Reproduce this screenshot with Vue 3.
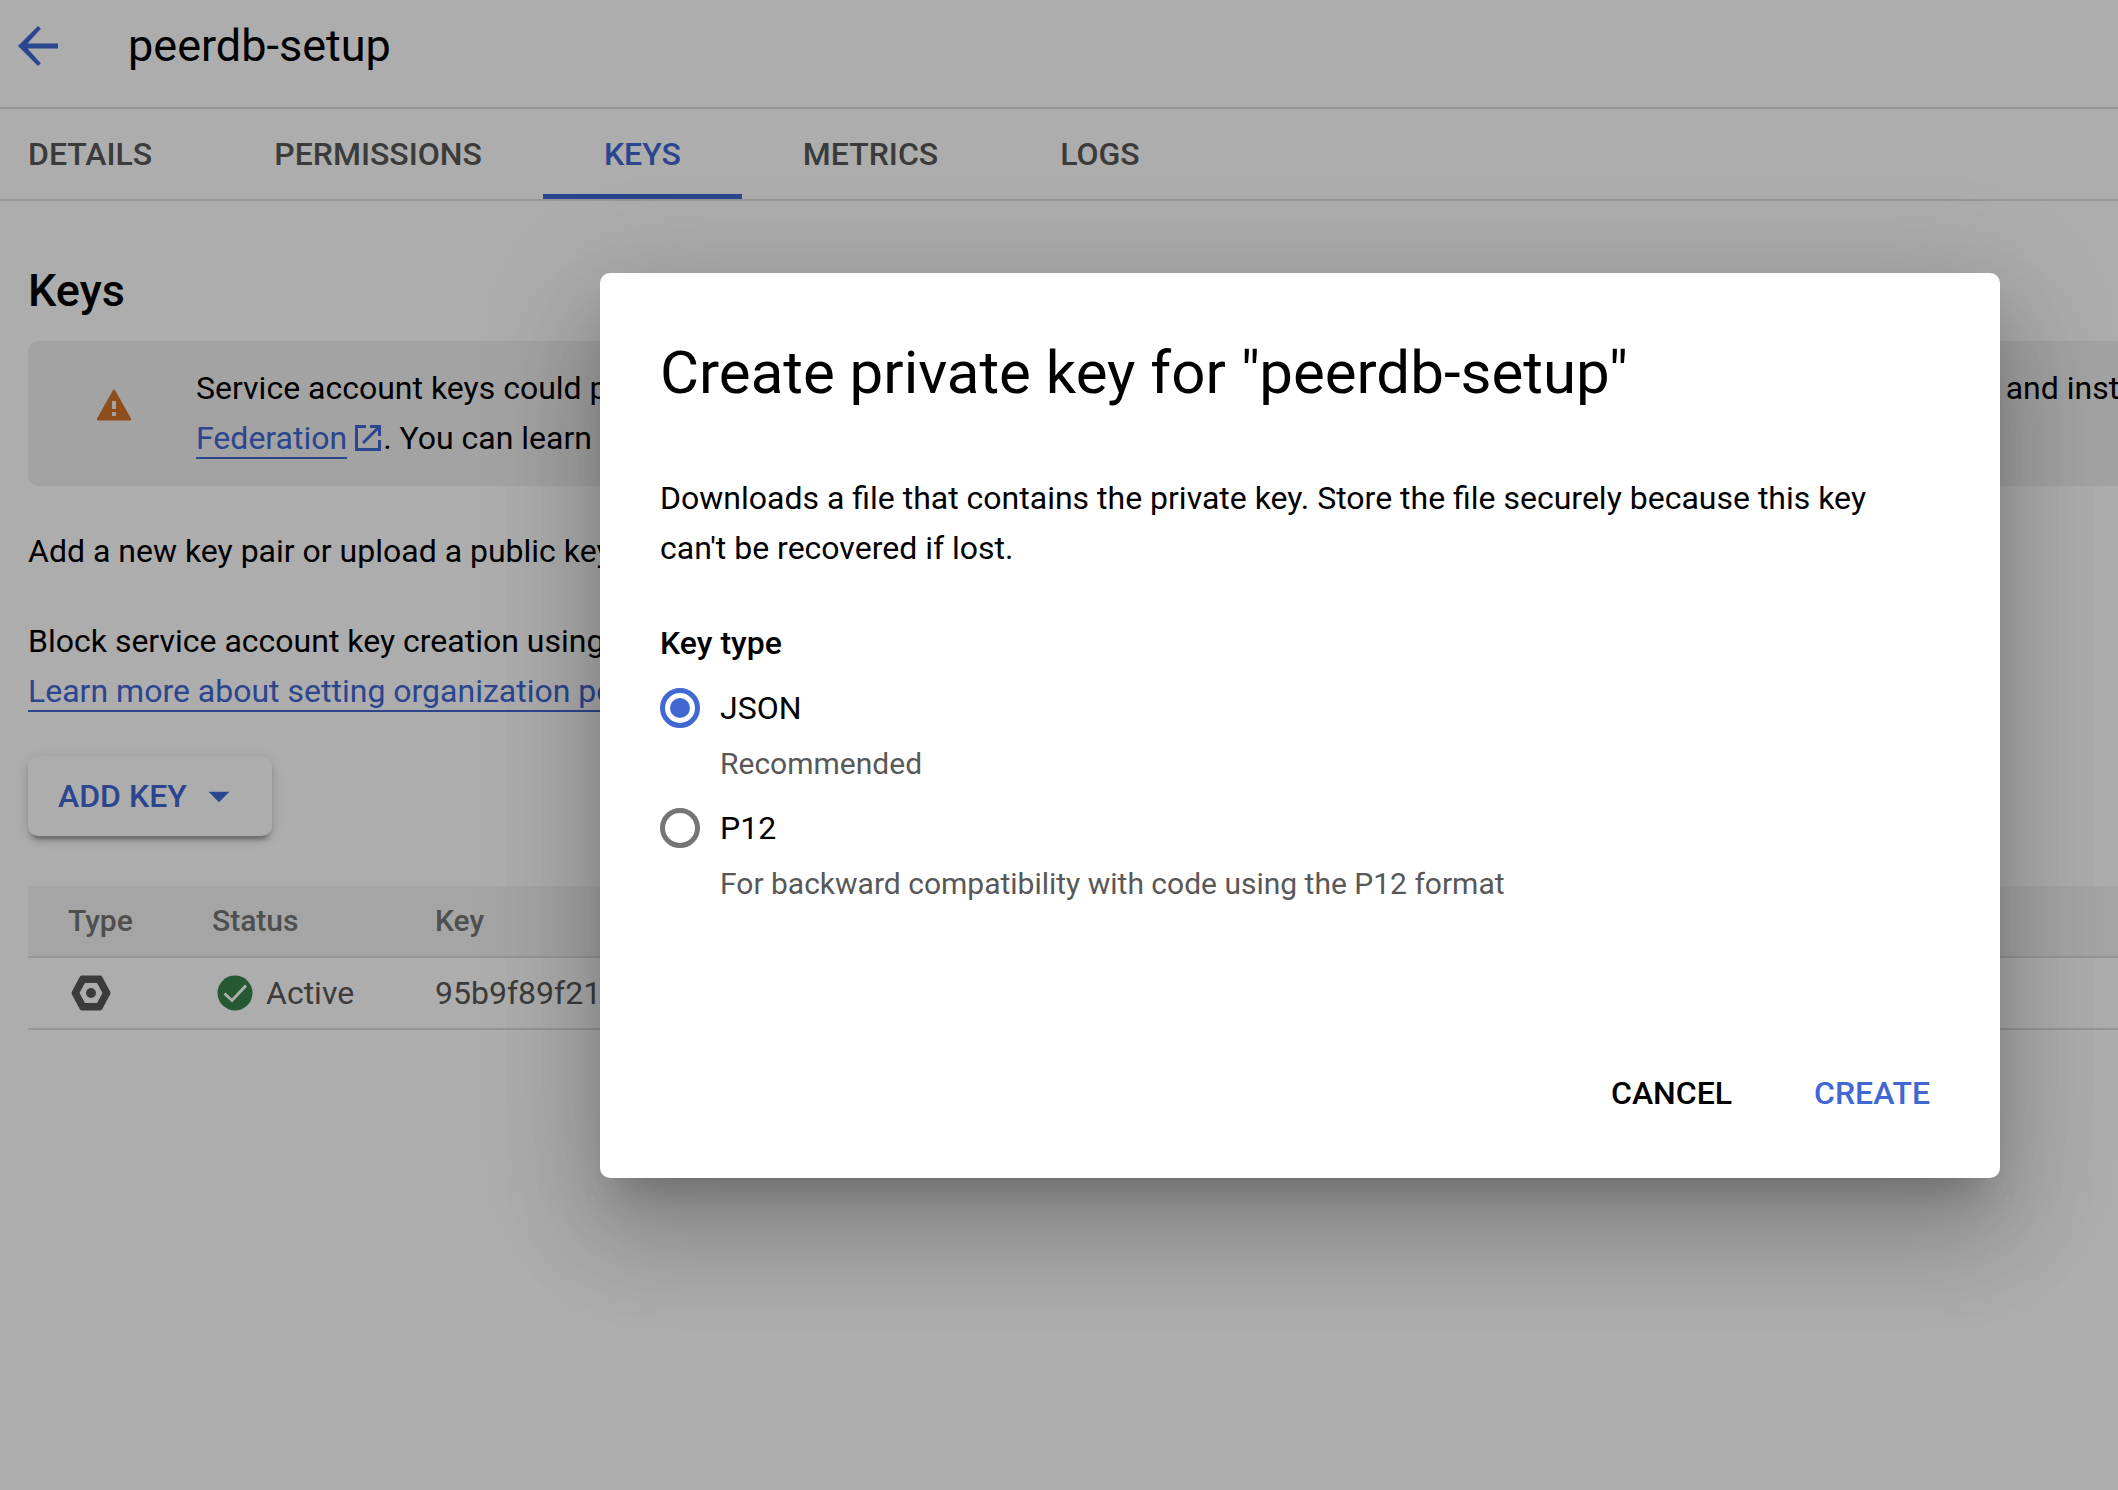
<script setup>
import { ref } from 'vue'

const account = 'peerdb-setup'
const tabs = ['Details', 'Permissions', 'Keys', 'Metrics', 'Logs']
const activeTab = ref('Keys')
const keyType = ref('json')
const keyTypes = [
  { value: 'json', label: 'JSON', hint: 'Recommended' },
  { value: 'p12', label: 'P12', hint: 'For backward compatibility with code using the P12 format' },
]
</script>

<template>
  <div class="page">
    <header class="topbar">
      <button class="back" type="button" aria-label="Back">
        <svg viewBox="0 0 24 24"><path d="M20 11H7.83l5.29-5.89L12 4l-8 8 8 8 1.12-1.11L7.83 13H20z" /></svg>
      </button>
      <h1>{{ account }}</h1>
    </header>

    <nav class="tabs">
      <a
        v-for="tab in tabs"
        :key="tab"
        href="#"
        :class="['tab', { active: tab === activeTab }]"
        @click.prevent="activeTab = tab"
      >{{ tab }}</a>
    </nav>

    <main class="content">
      <h2>Keys</h2>

      <div class="notice">
        <svg class="warning" viewBox="0 0 36 32">
          <path d="M16.800 1.500q1.200-2 2.400 0L35 29.500q.8 2-1.200 2H2.200q-2 0-1.200-2z" />
          <path class="mark" d="M16 12h4v8h-4zM16 23h4v4h-4z" />
        </svg>
        <p>
          Service account keys could pose a security risk if compromised. We'd recommend you avoid downloading service account keys and instead use the Workload Identity<br>
          <a href="#" class="link">Federation</a>
          <svg class="external" viewBox="0 0 26 26"><path d="M11 1.500H1.500v23h23V15M15 1.500h9.500V11M24.500 1.500L8 18" /></svg>. You can learn more about the best way to authenticate service accounts on Google Cloud.
        </p>
      </div>

      <p class="text">Add a new key pair or upload a public key certificate from an existing key pair.</p>
      <p class="text">
        Block service account key creation using organization policies.<br>
        <a href="#" class="link">Learn more about setting organization policies for service accounts</a>
      </p>

      <button class="add-key" type="button">
        Add key
        <svg viewBox="0 0 24 24"><path d="M7 10l5 5 5-5z" /></svg>
      </button>

      <table>
        <thead>
          <tr>
            <th class="type">Type</th>
            <th class="status">Status</th>
            <th>Key</th>
          </tr>
        </thead>
        <tbody>
          <tr>
            <td>
              <svg class="icon" viewBox="0 0 46 46" role="img" aria-label="Service account key">
                <path
                  fill="#585858"
                  fill-rule="evenodd"
                  d="M14 5.500h18q1.500 0 2.200 1.200l8 15q.6 1.300 0 2.600l-8 15q-.7 1.200-2.200 1.200H14q-1.500 0-2.200-1.200l-8-15q-.6-1.300 0-2.600l8-15q.7-1.200 2.200-1.200zM17 13l-5.500 10L17 33h12l5.500-10L29 13z"
                />
                <circle cx="23" cy="23" r="5" fill="#585858" />
              </svg>
            </td>
            <td>
              <span class="state">
                <svg class="icon" viewBox="0 0 46 46">
                  <circle cx="23" cy="23" r="17.500" fill="#388249" />
                  <path d="M12.500 23.500l7.500 7L34 15.500" fill="none" stroke="#fff" stroke-width="3" />
                </svg>
                Active
              </span>
            </td>
            <td>95b9f89f21</td>
          </tr>
        </tbody>
      </table>
    </main>

    <div class="backdrop">
      <form class="dialog" role="dialog" aria-labelledby="dialog-title" @submit.prevent>
        <h2 id="dialog-title">Create private key for "{{ account }}"</h2>
        <p class="lead">
          Downloads a file that contains the private key. Store the file securely because this key can't be recovered if lost.
        </p>
        <fieldset>
          <legend>Key type</legend>
          <div v-for="type in keyTypes" :key="type.value" class="option">
            <label>
              <input v-model="keyType" type="radio" name="key-type" :value="type.value" :aria-describedby="`hint-${type.value}`">
              {{ type.label }}
            </label>
            <p :id="`hint-${type.value}`" class="hint">{{ type.hint }}</p>
          </div>
        </fieldset>
        <div class="actions">
          <button type="button">Cancel</button>
          <button type="submit" class="primary">Create</button>
        </div>
      </form>
    </div>
  </div>
</template>

<style>
body {
  margin: 0;
}
</style>

<style scoped>
.page {
  min-height: 100vh;
  overflow: hidden;
  position: relative;
  background: #fff;
  color: #000;
  font: 400 32px/50px Roboto, sans-serif;
}

h1,
h2,
p {
  margin: 0;
}

button {
  border: 0;
  background: none;
  font: inherit;
  font-weight: 500;
  text-transform: uppercase;
  cursor: pointer;
}

.topbar {
  display: flex;
  align-items: center;
  gap: 60px;
  padding: 16px 8px 31px;
  border-bottom: 2px solid #dedede;
}

.back {
  display: flex;
  padding: 0;
}

.back svg {
  width: 60px;
  height: 60px;
  fill: #4067d2;
}

h1 {
  font-size: 45px;
  line-height: 60px;
  font-weight: 400;
}

.tabs {
  display: flex;
  border-bottom: 2px solid #dedede;
}

.tab {
  padding: 20px 61px 15px;
  border-bottom: 5px solid transparent;
  color: #585858;
  font-weight: 500;
  text-transform: uppercase;
  text-decoration: none;
}

.tab:first-child {
  padding-left: 28px;
}

.tab.active {
  color: #4067d2;
  border-color: #4067d2;
}

.content {
  display: flex;
  flex-direction: column;
  align-items: flex-start;
  padding: 60px 0 60px 28px;
}

.content h2 {
  font-size: 45px;
  line-height: 60px;
  font-weight: 500;
}

.notice {
  align-self: stretch;
  display: flex;
  align-items: center;
  gap: 64px;
  margin: 20px 0 40px;
  padding: 22px 0 23px 68px;
  border-radius: 10px 0 0 10px;
  background: #f1f1f1;
  white-space: nowrap;
}

.warning {
  flex: none;
  width: 36px;
  height: 32px;
  margin-bottom: 16px;
  fill: #d27428;
}

.warning .mark {
  fill: #f1f1f1;
}

.external {
  width: 26px;
  height: 26px;
  margin: 0 2px 0 8px;
  vertical-align: -2px;
  fill: none;
  stroke: #4067d2;
  stroke-width: 3;
}

.link {
  color: #4067d2;
  text-decoration: none;
  border-bottom: 2px solid #4067d2;
}

.text {
  margin-bottom: 40px;
  white-space: nowrap;
}

.add-key {
  display: flex;
  align-items: center;
  gap: 7px;
  padding: 15px 28px 15px 30px;
  border-radius: 10px;
  color: #4067d2;
  background: #fff;
  box-shadow:
    0 8px 3px -5px rgba(0, 0, 0, 0.2),
    0 5px 5px rgba(0, 0, 0, 0.14),
    0 3px 13px rgba(0, 0, 0, 0.12);
}

.add-key svg {
  width: 50px;
  height: 50px;
  fill: #4067d2;
}

table {
  align-self: stretch;
  margin-top: 50px;
  border-collapse: separate;
  border-spacing: 0;
  table-layout: fixed;
  width: 100%;
}

th,
td {
  padding: 10px 0 10px 40px;
  border-bottom: 2px solid #dedede;
  text-align: left;
}

th {
  background: #f3f3f3;
  color: #757575;
  font-size: 30px;
  font-weight: 500;
}

td {
  color: #585858;
}

.type {
  width: 104px;
}

.status {
  width: 183px;
}

.icon {
  display: block;
  width: 46px;
  height: 46px;
}

.state {
  display: flex;
  align-items: center;
  gap: 8px;
}

.backdrop {
  position: absolute;
  inset: 0;
  display: flex;
  justify-content: flex-end;
  align-items: flex-start;
  padding: 273px 118px 0;
  background: rgba(0, 0, 0, 0.32);
}

.dialog {
  flex: 0 1 1400px;
  box-sizing: border-box;
  padding: 60px;
  border-radius: 10px;
  background: #fff;
  box-shadow:
    0 28px 38px -18px rgba(0, 0, 0, 0.2),
    0 60px 95px 8px rgba(0, 0, 0, 0.14),
    0 23px 115px 20px rgba(0, 0, 0, 0.12);
}

.dialog h2 {
  font-size: 60px;
  line-height: 80px;
  font-weight: 400;
}

.lead {
  margin: 60px 0 45px;
}

fieldset {
  margin: 0;
  padding: 0;
  border: 0;
}

legend {
  padding: 0;
  font-weight: 500;
}

.option {
  padding-top: 15px;
}

label {
  display: flex;
  align-items: center;
  gap: 20px;
}

input {
  appearance: none;
  box-sizing: border-box;
  width: 40px;
  height: 40px;
  margin: 0;
  border: 5px solid #757575;
  border-radius: 50%;
}

input:checked {
  border-color: #4067d2;
  padding: 5px;
  background: #4067d2 content-box;
}

.hint {
  margin: 11px 0 4px 60px;
  color: #585858;
  font-size: 30px;
  line-height: 40px;
}

.actions {
  display: flex;
  justify-content: flex-end;
  gap: 42px;
  margin-top: 160px;
}

.actions button {
  padding: 0 20px;
}

.actions .primary {
  margin-right: -10px;
  color: #4067d2;
}
</style>
